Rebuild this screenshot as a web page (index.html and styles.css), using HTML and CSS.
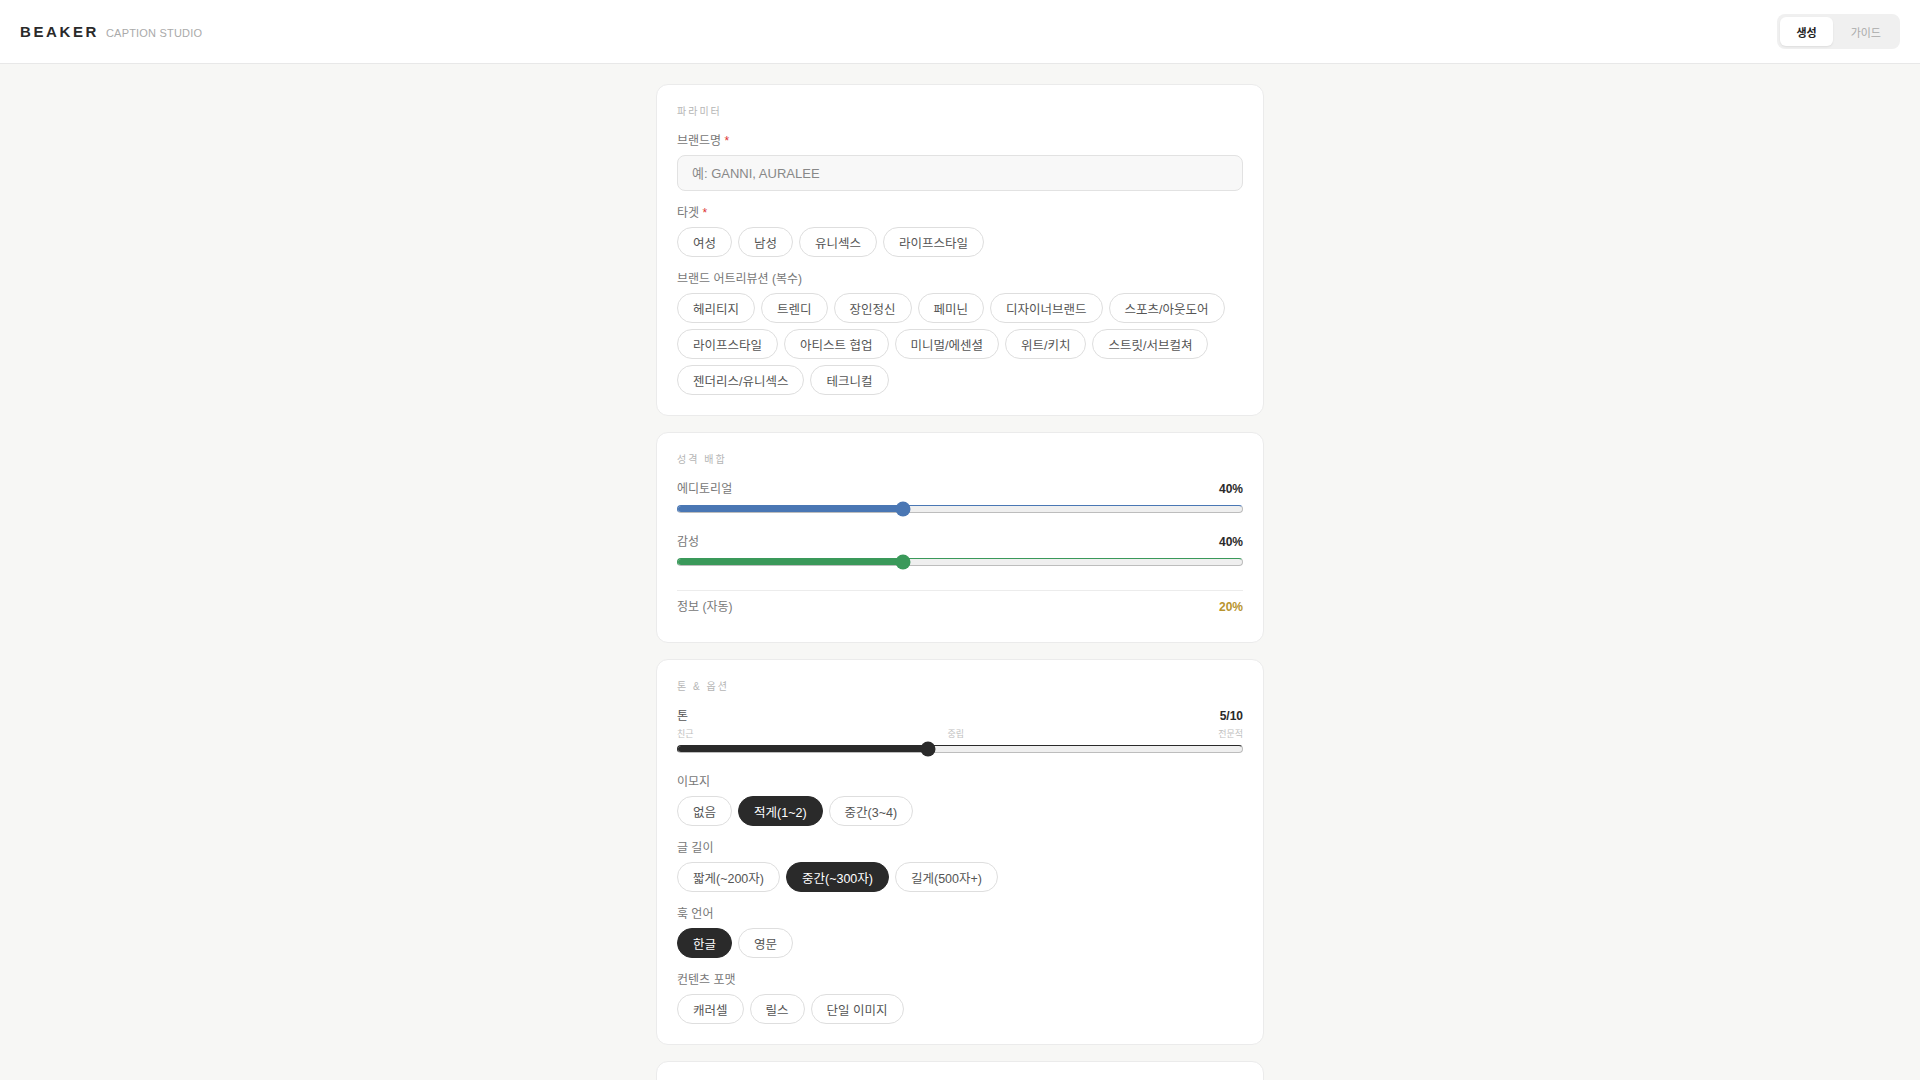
FILE: index.html
```html
<!DOCTYPE html>
<html lang="ko">
<head>
    <meta charset="UTF-8">
    <meta name="viewport" content="width=device-width, initial-scale=1.0">
    <title>BEAKER Caption Studio</title>
    <link rel="stylesheet" href="styles.css">
</head>
<body>
    <header class="topbar">
        <div class="brand">
            <span class="brand-name">BEAKER</span>
            <span class="brand-sub">CAPTION STUDIO</span>
        </div>
        <div class="tabs">
            <button class="tab active">생성</button>
            <button class="tab">가이드</button>
        </div>
    </header>

    <main class="container">
        <section class="card">
            <div class="card-title">파라미터</div>

            <div class="field">
                <div class="label">브랜드명 <span class="req">*</span></div>
                <input class="text-input" type="text" placeholder="예: GANNI, AURALEE">
            </div>

            <div class="field">
                <div class="label">타겟 <span class="req">*</span></div>
                <div class="chips">
                    <button class="chip">여성</button>
                    <button class="chip">남성</button>
                    <button class="chip">유니섹스</button>
                    <button class="chip">라이프스타일</button>
                </div>
            </div>

            <div class="field">
                <div class="label">브랜드 어트리뷰션 (복수)</div>
                <div class="chips">
                    <button class="chip">헤리티지</button>
                    <button class="chip">트렌디</button>
                    <button class="chip">장인정신</button>
                    <button class="chip">페미닌</button>
                    <button class="chip">디자이너브랜드</button>
                    <button class="chip">스포츠/아웃도어</button>
                    <button class="chip">라이프스타일</button>
                    <button class="chip">아티스트 협업</button>
                    <button class="chip">미니멀/에센셜</button>
                    <button class="chip">위트/키치</button>
                    <button class="chip">스트릿/서브컬쳐</button>
                    <button class="chip">젠더리스/유니섹스</button>
                    <button class="chip">테크니컬</button>
                </div>
            </div>
        </section>

        <section class="card">
            <div class="card-title">성격 배합</div>

            <div class="slider-field">
                <div class="slider-head">
                    <span class="label">에디토리얼</span>
                    <span class="value">40%</span>
                </div>
                <div class="range blue">
                    <div class="range-track"><div class="range-fill" style="width: 40%"></div></div>
                    <div class="range-thumb" style="left: 40%"></div>
                </div>
            </div>

            <div class="slider-field">
                <div class="slider-head">
                    <span class="label">감성</span>
                    <span class="value">40%</span>
                </div>
                <div class="range green">
                    <div class="range-track"><div class="range-fill" style="width: 40%"></div></div>
                    <div class="range-thumb" style="left: 40%"></div>
                </div>
            </div>

            <div class="auto-row">
                <span class="label">정보 (자동)</span>
                <span class="value gold">20%</span>
            </div>
        </section>

        <section class="card">
            <div class="card-title">톤 &amp; 옵션</div>

            <div class="field tone-field">
                <div class="slider-head">
                    <span class="label strong">톤</span>
                    <span class="value">5/10</span>
                </div>
                <div class="ticks">
                    <span>친근</span>
                    <span>중립</span>
                    <span>전문적</span>
                </div>
                <div class="range dark">
                    <div class="range-track"><div class="range-fill" style="width: 44.4%"></div></div>
                    <div class="range-thumb" style="left: 44.4%"></div>
                </div>
            </div>

            <div class="field">
                <div class="label">이모지</div>
                <div class="chips">
                    <button class="chip">없음</button>
                    <button class="chip active">적게(1~2)</button>
                    <button class="chip">중간(3~4)</button>
                </div>
            </div>

            <div class="field">
                <div class="label">글 길이</div>
                <div class="chips">
                    <button class="chip">짧게(~200자)</button>
                    <button class="chip active">중간(~300자)</button>
                    <button class="chip">길게(500자+)</button>
                </div>
            </div>

            <div class="field">
                <div class="label">훅 언어</div>
                <div class="chips">
                    <button class="chip active">한글</button>
                    <button class="chip">영문</button>
                </div>
            </div>

            <div class="field">
                <div class="label">컨텐츠 포맷</div>
                <div class="chips">
                    <button class="chip">캐러셀</button>
                    <button class="chip">릴스</button>
                    <button class="chip">단일 이미지</button>
                </div>
            </div>
        </section>

        <section class="card">
            <div class="card-title">레퍼런스</div>
            <textarea class="text-area" placeholder="참고할 캡션을 붙여넣으세요"></textarea>
        </section>
    </main>
</body>
</html>
```

FILE: styles.css
```css
* {
    box-sizing: border-box;
}

body {
    margin: 0;
    font-family: "Liberation Sans", "Noto Sans CJK KR", sans-serif;
    background-color: #f7f7f5;
    color: #222;
}

button {
    font-family: inherit;
    cursor: pointer;
}

.topbar {
    height: 64px;
    background-color: #fff;
    border-bottom: 1px solid #e8e8e8;
    display: flex;
    align-items: center;
    justify-content: space-between;
    padding: 0 20px;
}

.brand {
    display: flex;
    align-items: baseline;
    gap: 7px;
}

.brand-name {
    font-size: 15px;
    font-weight: 700;
    letter-spacing: 2.6px;
    color: #2a2a2a;
}

.brand-sub {
    font-size: 11px;
    letter-spacing: 0.2px;
    color: #aaa;
}

.tabs {
    display: flex;
    background-color: #f0f0f0;
    border-radius: 8px;
    padding: 3px;
    gap: 2px;
}

.tab {
    border: none;
    background: none;
    height: 29px;
    padding: 0 16px;
    border-radius: 6px;
    font-size: 11px;
    color: #aaa;
}

.tab.active {
    background-color: #fff;
    color: #222;
    font-weight: 700;
    box-shadow: 0 1px 2px rgba(0, 0, 0, 0.08);
}

.container {
    width: 608px;
    margin: 0 auto;
    padding: 20px 0;
    display: flex;
    flex-direction: column;
    gap: 16px;
}

.card {
    background-color: #fff;
    border: 1px solid #ebebeb;
    border-radius: 12px;
    padding: 20px;
}

.card-title {
    font-size: 10px;
    line-height: 14px;
    letter-spacing: 2px;
    color: #b5b5b5;
    margin-bottom: 14px;
}

.field {
    margin-bottom: 14px;
}

.field:last-child {
    margin-bottom: 0;
}

.label {
    font-size: 12px;
    line-height: 16px;
    color: #777;
    margin-bottom: 6px;
}

.label.strong {
    color: #555;
}

.req {
    color: #d33;
}

.text-input {
    width: 100%;
    height: 36px;
    border: 1px solid #e2e2e2;
    border-radius: 8px;
    background-color: #f8f8f8;
    padding: 0 14px;
    font-family: inherit;
    font-size: 13px;
    color: #333;
    outline: none;
}

.text-input::placeholder {
    color: #888;
}

.text-area {
    width: 100%;
    height: 90px;
    border: 1px solid #e2e2e2;
    border-radius: 8px;
    background-color: #f8f8f8;
    padding: 10px 14px;
    font-family: inherit;
    font-size: 13px;
    resize: none;
}

.chips {
    display: flex;
    flex-wrap: wrap;
    gap: 6px;
}

.chip {
    height: 30px;
    padding: 0 15px;
    border: 1px solid #dedede;
    border-radius: 999px;
    background-color: #fff;
    font-size: 12.5px;
    color: #555;
}

.chip.active {
    background-color: #2a2a2a;
    border-color: #2a2a2a;
    color: #fff;
}

.slider-field {
    margin-bottom: 17px;
}

.slider-head {
    display: flex;
    justify-content: space-between;
    align-items: center;
    margin-bottom: 4px;
}

.slider-head .label {
    margin-bottom: 0;
}

.value {
    font-size: 12px;
    font-weight: 700;
    color: #2a2a2a;
}

.value.gold {
    color: #b8942e;
}

.range {
    position: relative;
    height: 16px;
    display: flex;
    align-items: center;
}

.range-track {
    flex: 1;
    height: 8px;
    border: 1px solid #bdbdbd;
    border-radius: 4px;
    background-color: #efefef;
    overflow: hidden;
}

.range-fill {
    height: 100%;
}

.range-thumb {
    position: absolute;
    top: 50%;
    width: 15px;
    height: 15px;
    border-radius: 50%;
    transform: translate(-50%, -50%);
}

.blue .range-fill,
.blue .range-thumb {
    background-color: #4a77b4;
}

.blue .range-track {
    border-color: #4a77b4 #bdbdbd #bdbdbd #4a77b4;
}

.green .range-fill,
.green .range-thumb {
    background-color: #3a995a;
}

.green .range-track {
    border-color: #3a995a #bdbdbd #bdbdbd #3a995a;
}

.dark .range-fill,
.dark .range-thumb {
    background-color: #2a2a2a;
}

.dark .range-track {
    border-color: #2a2a2a #bdbdbd #bdbdbd #2a2a2a;
}

.auto-row {
    display: flex;
    justify-content: space-between;
    align-items: center;
    border-top: 1px solid #ececec;
    padding-top: 8px;
    margin-top: 20px;
    margin-bottom: 7px;
}

.auto-row .label {
    margin-bottom: 0;
}

.tone-field {
    margin-bottom: 17px;
}

.tone-field .slider-head {
    margin-bottom: 4px;
}

.ticks {
    display: flex;
    justify-content: space-between;
    font-size: 9px;
    line-height: 12px;
    color: #c0c0c0;
    margin-bottom: 1px;
}
```
